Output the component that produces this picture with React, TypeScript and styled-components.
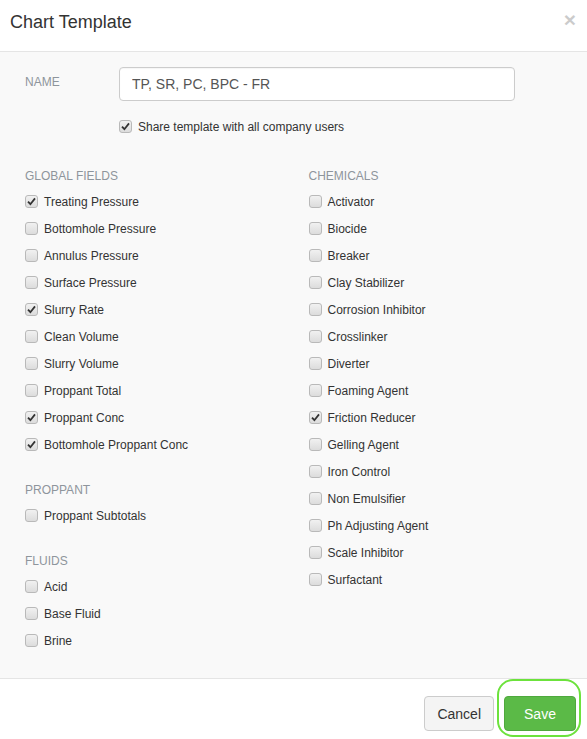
import React, { useState } from 'react';
import styled, { createGlobalStyle } from 'styled-components';

const GlobalStyle = createGlobalStyle`
  html, body {
    margin: 0;
    padding: 0;
    background: #ffffff;
  }
  body {
    font-family: "Liberation Sans", Arial, sans-serif;
    color: #333;
  }
  * {
    box-sizing: border-box;
  }
`;

const globalFields = [
  { label: 'Treating Pressure', checked: true },
  { label: 'Bottomhole Pressure', checked: false },
  { label: 'Annulus Pressure', checked: false },
  { label: 'Surface Pressure', checked: false },
  { label: 'Slurry Rate', checked: true },
  { label: 'Clean Volume', checked: false },
  { label: 'Slurry Volume', checked: false },
  { label: 'Proppant Total', checked: false },
  { label: 'Proppant Conc', checked: true },
  { label: 'Bottomhole Proppant Conc', checked: true },
];

const proppant = [{ label: 'Proppant Subtotals', checked: false }];

const fluids = [
  { label: 'Acid', checked: false },
  { label: 'Base Fluid', checked: false },
  { label: 'Brine', checked: false },
];

const chemicals = [
  { label: 'Activator', checked: false },
  { label: 'Biocide', checked: false },
  { label: 'Breaker', checked: false },
  { label: 'Clay Stabilizer', checked: false },
  { label: 'Corrosion Inhibitor', checked: false },
  { label: 'Crosslinker', checked: false },
  { label: 'Diverter', checked: false },
  { label: 'Foaming Agent', checked: false },
  { label: 'Friction Reducer', checked: true },
  { label: 'Gelling Agent', checked: false },
  { label: 'Iron Control', checked: false },
  { label: 'Non Emulsifier', checked: false },
  { label: 'Ph Adjusting Agent', checked: false },
  { label: 'Scale Inhibitor', checked: false },
  { label: 'Surfactant', checked: false },
];

type Item = { label: string; checked: boolean };

const CheckBox: React.FC<{ checked: boolean; onToggle: () => void }> = ({ checked, onToggle }) => (
  <Box onClick={onToggle}>
    {checked && (
      <svg width="9" height="9" viewBox="0 0 9 9">
        <path d="M1 4.6 L3.4 7.2 L8 1.4" fill="none" stroke="#333" strokeWidth="1.8" />
      </svg>
    )}
  </Box>
);

const Section: React.FC<{ title: string; items: Item[] }> = ({ title, items }) => {
  const [state, setState] = useState(items.map((i) => i.checked));

  return (
    <Group>
      <GroupTitle>{title}</GroupTitle>
      {items.map((item, idx) => (
        <Row key={item.label}>
          <CheckBox
            checked={state[idx]}
            onToggle={() => setState(state.map((v, j) => (j === idx ? !v : v)))}
          />
          <RowLabel>{item.label}</RowLabel>
        </Row>
      ))}
    </Group>
  );
};

const App: React.FC = () => {
  const [name, setName] = useState('TP, SR, PC, BPC - FR');
  const [shared, setShared] = useState(true);

  return (
    <>
      <GlobalStyle />
      <Modal>
        <Header>
          <Title>Chart Template</Title>
          <Close>×</Close>
        </Header>
        <Body>
          <NameRow>
            <FieldLabel>NAME</FieldLabel>
            <NameInput value={name} onChange={(e) => setName(e.target.value)} />
          </NameRow>
          <ShareRow>
            <CheckBox checked={shared} onToggle={() => setShared(!shared)} />
            <ShareLabel>Share template with all company users</ShareLabel>
          </ShareRow>
          <Columns>
            <Column>
              <Section title="GLOBAL FIELDS" items={globalFields} />
              <Section title="PROPPANT" items={proppant} />
              <Section title="FLUIDS" items={fluids} />
            </Column>
            <Column>
              <Section title="CHEMICALS" items={chemicals} />
            </Column>
          </Columns>
        </Body>
        <Footer>
          <Button>Cancel</Button>
          <SaveWrap>
            <Button primary>Save</Button>
            <Highlight />
          </SaveWrap>
        </Footer>
      </Modal>
    </>
  );
};

const Modal = styled.div`
  width: 587px;
  min-height: 739px;
  background: #fff;
  display: flex;
  flex-direction: column;
`;

const Header = styled.div`
  height: 52px;
  padding: 12px 10px 0 10px;
  border-bottom: 1px solid #e5e5e5;
  display: flex;
  justify-content: space-between;
  align-items: flex-start;
  background: #fff;
`;

const Title = styled.h4`
  margin: 0;
  font-size: 18px;
  font-weight: normal;
  line-height: 20px;
  color: #333;
`;

const Close = styled.button`
  border: none;
  background: transparent;
  padding: 0;
  margin: -3px 1px 0 0;
  font-family: "Liberation Sans", Arial, sans-serif;
  font-size: 21px;
  font-weight: bold;
  line-height: 21px;
  color: #000;
  opacity: 0.2;
  cursor: pointer;
`;

const Body = styled.div`
  flex: 1;
  background: #f9f9f9;
  padding: 15px 25px 23px 25px;
  border-bottom: 1px solid #e5e5e5;
`;

const NameRow = styled.div`
  display: flex;
  align-items: flex-start;
`;

const FieldLabel = styled.label`
  width: 94px;
  padding-top: 8px;
  font-size: 12px;
  line-height: 14px;
  color: #8e959c;
`;

const NameInput = styled.input`
  width: 396px;
  height: 34px;
  padding: 6px 12px;
  border: 1px solid #ccc;
  border-radius: 4px;
  background: #fff;
  font-family: "Liberation Sans", Arial, sans-serif;
  font-size: 14px;
  color: #555;
  box-shadow: inset 0 1px 1px rgba(0, 0, 0, 0.04);
  outline: none;
`;

const ShareRow = styled.div`
  display: flex;
  align-items: center;
  height: 27px;
  margin: 12px 0 0 94px;
`;

const ShareLabel = styled.span`
  margin-left: 6px;
  font-size: 12px;
  color: #333;
`;

const Columns = styled.div`
  display: grid;
  grid-template-columns: 1fr 1fr;
  column-gap: 30px;
  margin-top: 28px;
`;

const Column = styled.div`
  display: flex;
  flex-direction: column;
  gap: 24px;
`;

const Group = styled.div`
  display: flex;
  flex-direction: column;
`;

const GroupTitle = styled.div`
  font-size: 12px;
  line-height: 16px;
  color: #8e959c;
  margin-bottom: 4px;
`;

const Row = styled.div`
  display: flex;
  align-items: center;
  height: 27px;
`;

const Box = styled.span`
  width: 13px;
  height: 13px;
  flex: none;
  border: 1px solid #b9b9b9;
  border-radius: 3px;
  background: linear-gradient(#f1f1f1, #dcdcdc);
  display: flex;
  align-items: center;
  justify-content: center;
  cursor: pointer;
`;

const RowLabel = styled.span`
  margin-left: 6px;
  font-size: 12px;
  color: #333;
`;

const Footer = styled.div`
  display: flex;
  justify-content: flex-end;
  gap: 10px;
  padding: 17px 11px 8px 0;
  background: #fff;
`;

const SaveWrap = styled.div`
  position: relative;
`;

const Button = styled.button<{ primary?: boolean }>`
  height: 35px;
  padding: 6px 12px;
  min-width: ${({ primary }) => (primary ? '72px' : '69px')};
  border-radius: 4px;
  border: 1px solid ${({ primary }) => (primary ? '#4fa93d' : '#ccc')};
  background: ${({ primary }) => (primary ? '#5bba47' : '#f4f4f4')};
  color: ${({ primary }) => (primary ? '#fff' : '#333')};
  font-family: "Liberation Sans", Arial, sans-serif;
  font-size: 14px;
  cursor: pointer;
`;

const Highlight = styled.span`
  position: absolute;
  left: -7px;
  right: -5px;
  top: -17px;
  bottom: -6px;
  border: 2px solid #6ce23c;
  border-radius: 16px;
  pointer-events: none;
`;

export default App;
